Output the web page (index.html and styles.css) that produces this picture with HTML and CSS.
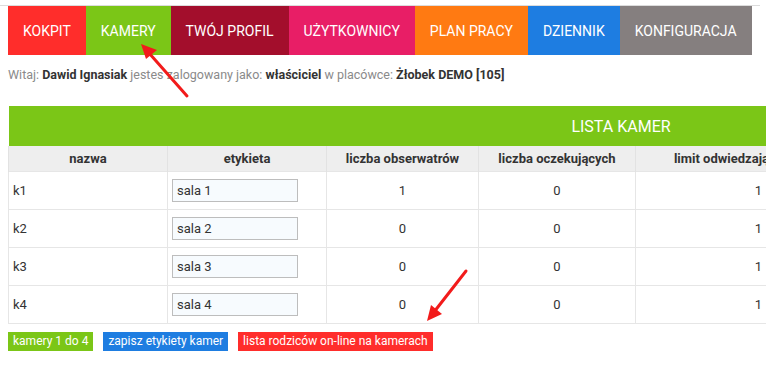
FILE: index.html
```html
<!DOCTYPE html>
<html lang="pl">
<head>
<meta charset="utf-8">
<link rel="stylesheet" href="styles.css">
</head>
<body>
<div class="topline"></div>
<nav class="nav">
  <a class="tab t-red">KOKPIT</a>
  <a class="tab t-green">KAMERY</a>
  <a class="tab t-maroon">TWÓJ PROFIL</a>
  <a class="tab t-pink">UŻYTKOWNICY</a>
  <a class="tab t-orange">PLAN PRACY</a>
  <a class="tab t-blue">DZIENNIK</a>
  <a class="tab t-gray">KONFIGURACJA</a>
</nav>
<p class="welcome">Witaj: <b>Dawid Ignasiak</b> jestes zalogowany jako: <b>właściciel</b> w placówce: <b>Żłobek DEMO [105]</b></p>
<table class="cams">
  <colgroup>
    <col class="c1"><col class="c2"><col class="c3"><col class="c4"><col class="c5"><col>
  </colgroup>
  <thead>
    <tr><th colspan="6" class="title">LISTA KAMER</th></tr>
    <tr class="heads"><th>nazwa</th><th>etykieta</th><th>liczba obserwatrów</th><th>liczba oczekujących</th><th>limit odwiedzających kamery</th><th></th></tr>
  </thead>
  <tbody>
    <tr><td class="name">k1</td><td><input class="lbl" value="sala 1"></td><td>1</td><td>0</td><td>1</td><td></td></tr>
    <tr><td class="name">k2</td><td><input class="lbl" value="sala 2"></td><td>0</td><td>0</td><td>1</td><td></td></tr>
    <tr><td class="name">k3</td><td><input class="lbl" value="sala 3"></td><td>0</td><td>0</td><td>1</td><td></td></tr>
    <tr><td class="name">k4</td><td><input class="lbl" value="sala 4"></td><td>0</td><td>0</td><td>1</td><td></td></tr>
  </tbody>
</table>
<div class="actions">
  <a class="btn b-green">kamery 1 do 4</a>
  <a class="btn b-blue">zapisz etykiety kamer</a>
  <a class="btn b-red">lista rodziców on-line na kamerach</a>
</div>
<svg class="arrows" width="766" height="369" viewBox="0 0 766 369">
  <line x1="187" y1="96" x2="149" y2="53" stroke="#f21b1b" stroke-width="3" stroke-linecap="round"/>
  <polygon points="141,44 157,50 146,59" fill="#f21b1b"/>
  <line x1="466" y1="271" x2="434" y2="312" stroke="#f21b1b" stroke-width="3" stroke-linecap="round"/>
  <polygon points="427,321 431,305 442,314" fill="#f21b1b"/>
</svg>
</body>
</html>
```
FILE: styles.css
```css
html { overflow: hidden; }
body {
  margin: 0;
  padding: 0 8px;
  font-family: Roboto, "Liberation Sans", sans-serif;
  font-size: 13px;
  color: #333;
  background: #fff;
  width: 1300px;
}
.topline {
  margin-top: 5px;
  margin-left: -8px;
  width: 760px;
  height: 1px;
  background: #dcdcdc;
}
.nav {
  display: flex;
  height: 49px;
}
.tab {
  display: flex;
  align-items: center;
  padding: 0 15px;
  color: #fff;
  font-size: 14px;
  text-decoration: none;
}
.t-red { background: #ff2d2b; }
.t-green { background: #7bc617; }
.t-maroon { background: #a30e2c; }
.t-pink { background: #e81e66; }
.t-orange { background: #ff7a12; }
.t-blue { background: #1e7de1; }
.t-gray { background: #857f7f; }
.welcome {
  margin: 0;
  padding-top: 12px;
  height: 51px;
  box-sizing: border-box;
  color: #8a8a8a;
  font-size: 12.5px;
}
.welcome b { color: #333; font-weight: 700; }
.cams {
  border-collapse: collapse;
  table-layout: fixed;
  width: 1226px;
}
.c1 { width: 159px; }
.c2 { width: 159px; }
.c3 { width: 152px; }
.c4 { width: 157px; }
.c5 { width: 246px; }
.title {
  background: #7bc617;
  color: #fff;
  font-size: 16px;
  font-weight: 400;
  height: 40px;
  padding: 0;
  text-align: center;
}
.heads th {
  background: #eeeeee;
  height: 25px;
  padding: 0;
  font-weight: 700;
  font-size: 13px;
  border-left: 1px solid #e2e2e2;
  border-right: 1px solid #e2e2e2;
  white-space: nowrap;
  overflow: hidden;
}
.cams td {
  height: 37px;
  padding: 0 4px;
  border: 1px solid #e6e6e6;
  text-align: center;
  font-size: 13px;
  color: #333;
}
.cams td.name { text-align: left; }
.cams td:nth-child(2) { text-align: left; }
.lbl {
  display: block;
  box-sizing: border-box;
  width: 126px;
  height: 23px;
  border: 1px solid #bdbdbd;
  background: #f7fbfe;
  padding: 0 4px;
  font-family: Roboto, "Liberation Sans", sans-serif;
  font-size: 13px;
  color: #333;
}
.actions {
  display: flex;
  gap: 10px;
  margin-top: 8px;
}
.btn {
  display: block;
  height: 19px;
  line-height: 19px;
  padding: 0 5px;
  color: #fff;
  font-size: 12px;
  text-decoration: none;
}
.b-green { background: #7bc617; }
.b-blue { background: #1e7de1; }
.b-red { background: #ff2d2b; }
.arrows {
  position: absolute;
  left: 0;
  top: 0;
  pointer-events: none;
}
```
